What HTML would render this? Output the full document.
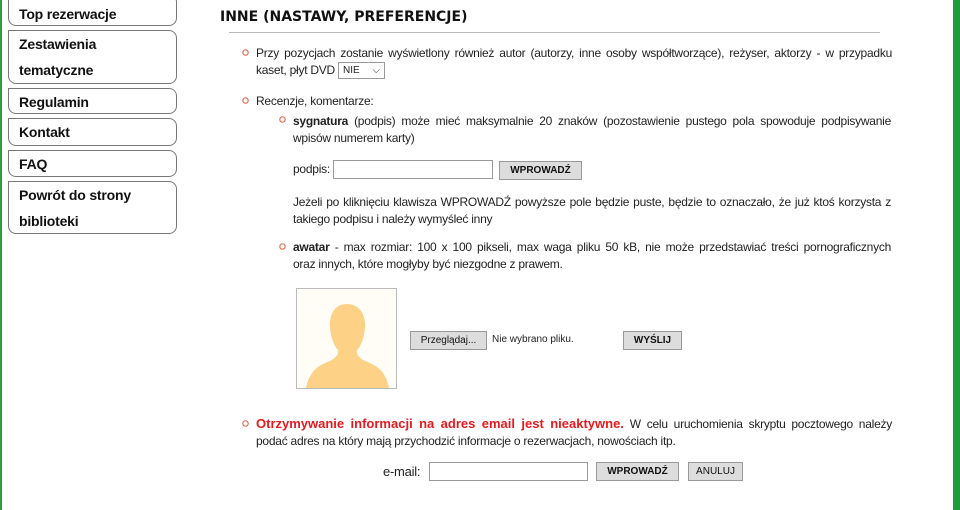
<!DOCTYPE html>
<html><head><meta charset="utf-8"><style>
*{margin:0;padding:0;box-sizing:border-box}
body{width:960px;height:510px;overflow:hidden;background:#fff;font-family:"Liberation Sans",Arial,sans-serif;font-size:12px;color:#222;position:relative}
.a{position:absolute}
.nav{position:absolute;left:8px;width:169px;border:1px solid #777;border-radius:0 0 8px 8px;border-top-right-radius:8px;font-weight:bold;font-size:14px;color:#111;padding-left:10px;line-height:26px;letter-spacing:-0.2px}
.b{display:inline-block;width:11px;height:11px;border:2px solid #e0735a;border-radius:50%;position:absolute;transform:scale(.6)}
.btn{position:absolute;background:#ddd;border:1px solid #999;font-size:10px;font-weight:bold;text-align:center;line-height:17px;height:19px;color:#111}
.inp{position:absolute;border:1px solid #999;height:19px;background:#fff}
p{position:absolute;line-height:17px;white-space:nowrap;letter-spacing:-0.25px}
.j{display:block;text-align:justify;text-align-last:justify;white-space:normal}
</style></head><body>
<div class="a" style="left:0;top:0;width:2px;height:510px;background:#2aa03c"></div>
<div class="a" style="left:953px;top:0;width:7px;height:510px;background:#1e9e3a"></div>
<div class="nav" style="top:-6px;height:32px;line-height:38px">Top rezerwacje</div>
<div class="nav" style="top:30px;height:54px">Zestawienia<br>tematyczne</div>
<div class="nav" style="top:88px;height:26px">Regulamin</div>
<div class="nav" style="top:118px;height:28px">Kontakt</div>
<div class="nav" style="top:150px;height:27px">FAQ</div>
<div class="nav" style="top:181px;height:53px">Powrót do strony<br>biblioteki</div>
<div class="a" style="left:220px;top:9px;font-family:'DejaVu Sans',sans-serif;font-weight:bold;font-size:14px;color:#111">INNE (NASTAWY, PREFERENCJE)</div>
<div class="a" style="left:229px;top:32px;width:651px;height:1px;background:#bbb"></div>
<span class="b" style="left:240px;top:47px"></span>
<p style="left:256px;top:45px;width:636px"><span class="j">Przy pozycjach zostanie wyświetlony również autor (autorzy, inne osoby współtworzące), reżyser, aktorzy - w przypadku</span>kaset, płyt DVD</p>
<div class="a" style="left:338px;top:62px;width:47px;height:17px;border:1px solid #999;font-size:10px;padding-left:4px;line-height:15px">NIE <span style="position:absolute;right:4px">⌵</span></div>
<span class="b" style="left:240px;top:95px"></span>
<p style="left:256px;top:93px">Recenzje, komentarze:</p>
<span class="b" style="left:277px;top:114px"></span>
<p style="left:293px;top:113px;width:598px"><span class="j"><b>sygnatura</b> (podpis) może mieć maksymalnie 20 znaków (pozostawienie pustego pola spowoduje podpisywanie</span>wpisów numerem karty)</p>
<p style="left:293px;top:161px">podpis:</p>
<div class="inp" style="left:333px;top:160px;width:160px"></div>
<div class="btn" style="left:499px;top:161px;width:83px">WPROWADŹ</div>
<p style="left:293px;top:194px;width:598px"><span class="j">Jeżeli po kliknięciu klawisza WPROWADŹ powyższe pole będzie puste, będzie to oznaczało, że już ktoś korzysta z</span>takiego podpisu i należy wymyśleć inny</p>
<span class="b" style="left:277px;top:241px"></span>
<p style="left:293px;top:239px;width:598px"><span class="j"><b>awatar</b> - max rozmiar: 100 x 100 pikseli, max waga pliku 50 kB, nie może przedstawiać treści pornograficznych</span>oraz innych, które mogłyby być niezgodne z prawem.</p>
<div class="a" style="left:296px;top:288px;width:101px;height:101px;border:1px solid #bbb;background:#fffdf5;overflow:hidden">
<svg width="99" height="99" viewBox="0 0 99 99"><path d="M50 15c-12 0-18 10-17 24 1 10 4 18 8 22 1 4-2 8-8 11-10 4-20 8-24 27h83c-4-19-14-23-24-27-6-3-9-7-8-11 4-4 7-12 8-22 1-14-6-24-18-24z" fill="#fdd286"/></svg></div>
<div class="btn" style="left:410px;top:331px;width:77px;font-weight:normal">Przeglądaj...</div>
<div class="a" style="left:492px;top:334px;font-size:10px">Nie wybrano pliku.</div>
<div class="btn" style="left:623px;top:331px;width:59px">WYŚLIJ</div>
<span class="b" style="left:240px;top:418px"></span>
<p style="left:256px;top:415px;width:636px"><span class="j"><b style="color:#e8191e;font-size:13px;letter-spacing:0">Otrzymywanie informacji na adres email jest nieaktywne.</b> W celu uruchomienia skryptu pocztowego należy</span>podać adres na który mają przychodzić informacje o rezerwacjach, nowościach itp.</p>
<p style="left:383px;top:463px;font-size:13px">e-mail:</p>
<div class="inp" style="left:429px;top:462px;width:159px"></div>
<div class="btn" style="left:596px;top:462px;width:83px">WPROWADŹ</div>
<div class="btn" style="left:688px;top:462px;width:55px;font-weight:normal">ANULUJ</div>
</body></html>
